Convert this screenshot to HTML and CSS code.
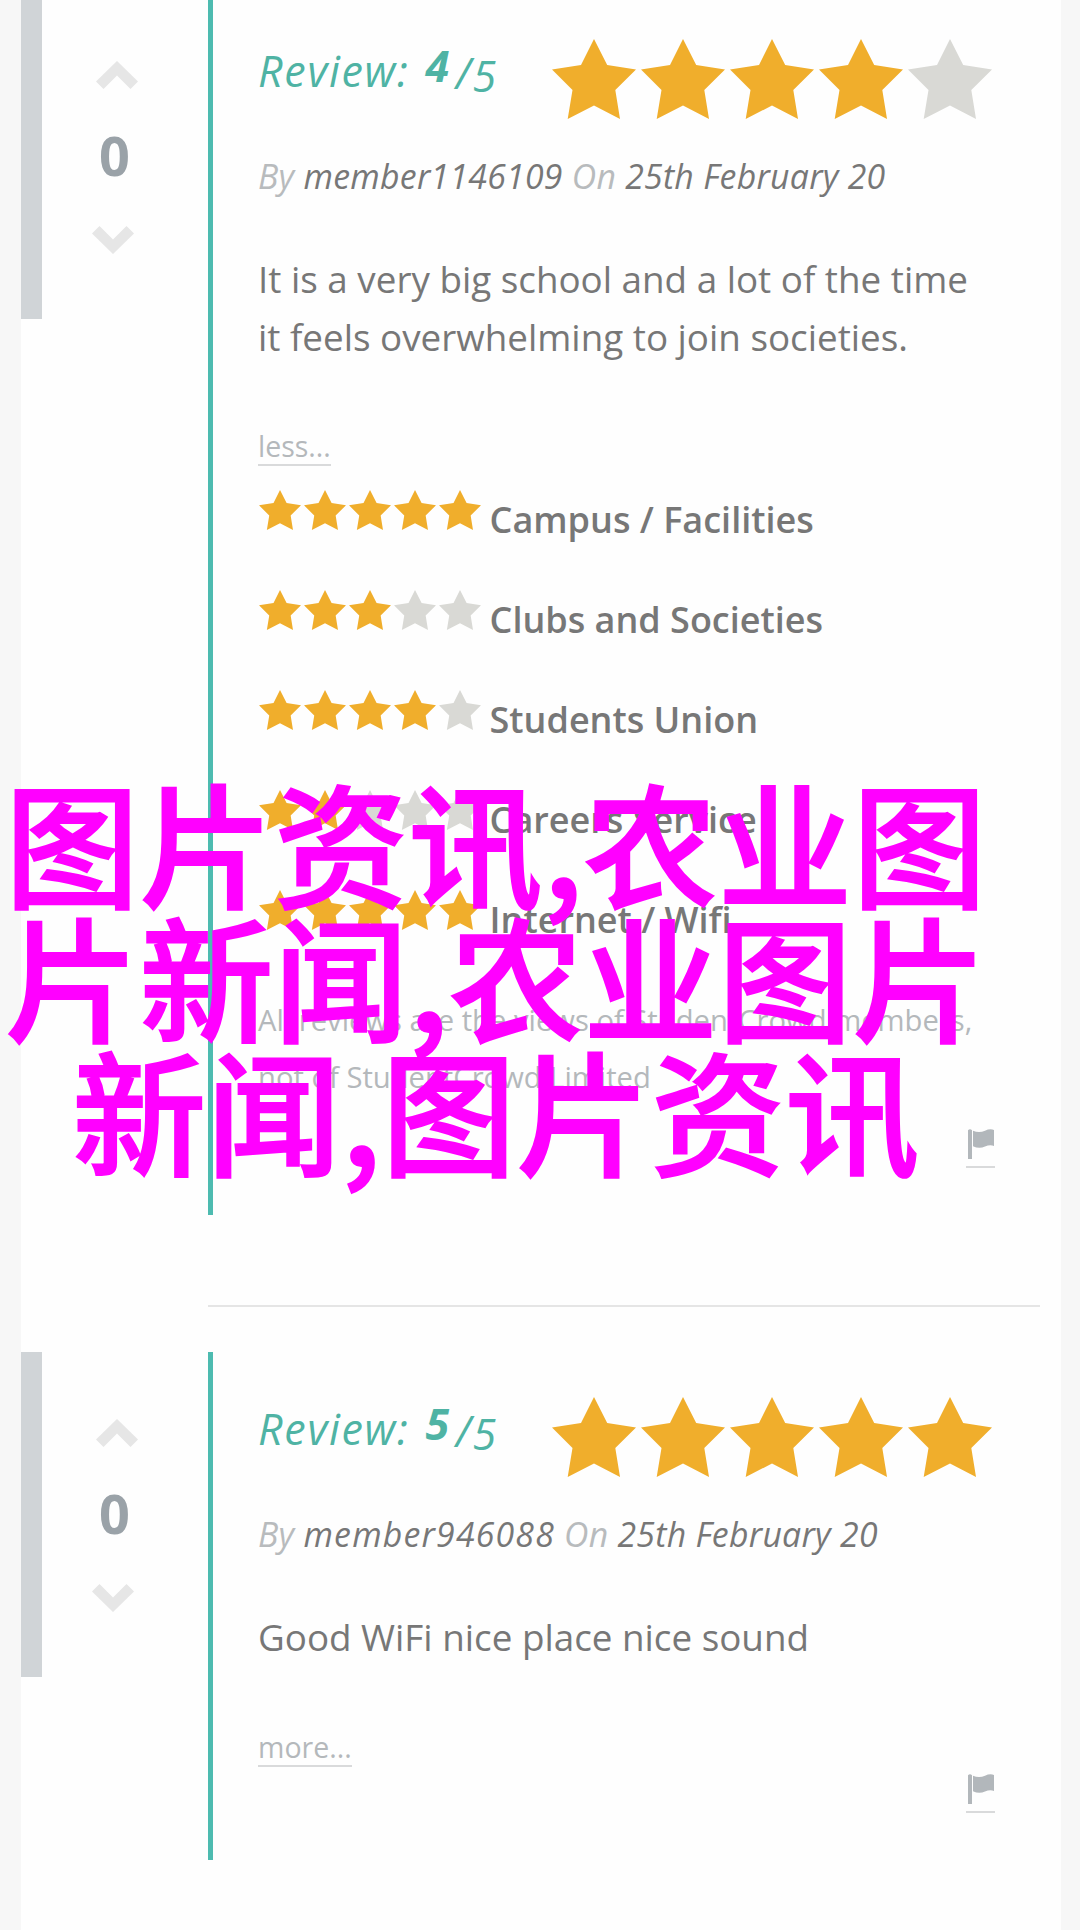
FILE: index.html
```
<!DOCTYPE html>
<html lang="en">

<head>
  <meta charset="UTF-8">
  <meta name="viewport" content="width=device-width, initial-scale=1.0">
  <title>Reviews</title>
  <link rel="stylesheet" href="styles.css">
</head>

<body>
  <!-- icons -->
  <svg class="icons">
    <symbol id="star" viewBox="0 0 84 80">
      <path d="M42 0L55.2 26L84 30.5L63.3 51L68 80L42 66.5L15.7 80L20.5 51L0 30.5L29 26Z" />
    </symbol>
    <symbol id="arrow" viewBox="0 0 42 28">
      <path d="M21 0L42 20.5L34.5 28L21 14.5L7.5 28L0 20.5Z" />
    </symbol>
    <symbol id="flag" viewBox="0 0 26 30">
      <path d="M0 1.2Q2 -.8 4 1.2V30H0Z" />
      <path d="M5 1.8Q11 4.2 17 1.8Q22 -.6 26 1V17Q22 15.4 17 17.6Q11 20.2 5 17.2Z" />
    </symbol>
  </svg>

  <div class="page">
    <div class="review">
      <div class="vote">
        <svg class="vote-up"><use href="#arrow" /></svg>
        <div class="vote-num">0</div>
        <svg class="vote-down"><use href="#arrow" /></svg>
      </div>
      <div class="review-inner">
        <div class="review-head">
          <div class="review-ttl">Review: <b class="score">4</b><span class="slash">/</span><span class="total">5</span></div>
          <div class="stars">
            <svg><use href="#star" /></svg>
            <svg><use href="#star" /></svg>
            <svg><use href="#star" /></svg>
            <svg><use href="#star" /></svg>
            <svg class="off"><use href="#star" /></svg>
          </div>
        </div>
        <div class="review-by">By <span>member1146109</span> On <span>25th February 20</span></div>
        <p class="review-txt">It is a very big school and a lot of the time<br>it feels overwhelming to join societies.</p>
        <a href="#" class="toggle">less...</a>
        <div class="ratings">
          <div class="rating">
            <div class="stars stars-s">
              <svg><use href="#star" /></svg>
              <svg><use href="#star" /></svg>
              <svg><use href="#star" /></svg>
              <svg><use href="#star" /></svg>
              <svg><use href="#star" /></svg>
            </div>
            <div class="rating-ttl">Campus / Facilities</div>
          </div>
          <div class="rating">
            <div class="stars stars-s">
              <svg><use href="#star" /></svg>
              <svg><use href="#star" /></svg>
              <svg><use href="#star" /></svg>
              <svg class="off"><use href="#star" /></svg>
              <svg class="off"><use href="#star" /></svg>
            </div>
            <div class="rating-ttl">Clubs and Societies</div>
          </div>
          <div class="rating">
            <div class="stars stars-s">
              <svg><use href="#star" /></svg>
              <svg><use href="#star" /></svg>
              <svg><use href="#star" /></svg>
              <svg><use href="#star" /></svg>
              <svg class="off"><use href="#star" /></svg>
            </div>
            <div class="rating-ttl">Students Union</div>
          </div>
          <div class="rating">
            <div class="stars stars-s">
              <svg><use href="#star" /></svg>
              <svg><use href="#star" /></svg>
              <svg class="off"><use href="#star" /></svg>
              <svg class="off"><use href="#star" /></svg>
              <svg class="off"><use href="#star" /></svg>
            </div>
            <div class="rating-ttl">Careers Service</div>
          </div>
          <div class="rating">
            <div class="stars stars-s">
              <svg><use href="#star" /></svg>
              <svg><use href="#star" /></svg>
              <svg><use href="#star" /></svg>
              <svg><use href="#star" /></svg>
              <svg><use href="#star" /></svg>
            </div>
            <div class="rating-ttl">Internet / Wifi</div>
          </div>
        </div>
        <p class="note">All reviews are the views of StudentCrowd members,<br>not of StudentCrowd Limited</p>
        <a href="#" class="flag"><svg><use href="#flag" /></svg></a>
      </div>
    </div>

    <hr class="line">

    <div class="review">
      <div class="vote">
        <svg class="vote-up"><use href="#arrow" /></svg>
        <div class="vote-num">0</div>
        <svg class="vote-down"><use href="#arrow" /></svg>
      </div>
      <div class="review-inner">
        <div class="review-head">
          <div class="review-ttl">Review: <b class="score">5</b><span class="slash">/</span><span class="total">5</span></div>
          <div class="stars">
            <svg><use href="#star" /></svg>
            <svg><use href="#star" /></svg>
            <svg><use href="#star" /></svg>
            <svg><use href="#star" /></svg>
            <svg><use href="#star" /></svg>
          </div>
        </div>
        <div class="review-by">By <span class="wide">member946088</span> On <span>25th February 20</span></div>
        <p class="review-txt">Good WiFi nice place nice sound</p>
        <a href="#" class="toggle">more...</a>
        <a href="#" class="flag"><svg><use href="#flag" /></svg></a>
      </div>
    </div>
  </div>

  <!-- caption over the page -->
  <div class="caption" lang="zh-CN">图片资讯,农业图<br>片新闻,农业图片<br>新闻,图片资讯</div>
</body>

</html>
```
FILE: styles.css
```
body {
  margin: 0;
  background: #f7f7f7;
  font-family: "Open Sans", "Noto Sans", sans-serif;
  color: #777;
}

p {
  margin: 0;
}

a {
  color: #b4b8bb;
  text-decoration: none;
}

.icons {
  display: none;
}

.page {
  height: 1930px;
  margin: 0 19px 0 21px;
  background: #fefefe;
  overflow: hidden;
}

.review {
  display: flex;
  align-items: flex-start;
}

.review:first-child {
  margin-top: -6px;
}

/* vote */
.vote {
  box-sizing: border-box;
  display: flex;
  flex-direction: column;
  align-items: center;
  width: 187px;
  height: 325px;
  padding: 67px 21px 0 0;
  border-left: 21px solid #d0d4d7;
}

.vote svg {
  width: 42px;
  height: 28px;
  fill: #e6e6e6;
}

.vote-up {
  margin-left: 5px;
}

.vote .vote-down {
  margin: 5px 3px 0 0;
  transform: rotate(180deg);
}

.vote-num {
  font-size: 54px;
  font-weight: 700;
  line-height: 132px;
  color: #9aa2a8;
}

/* review */
.review-inner {
  flex: 1;
  display: flex;
  flex-direction: column;
  align-items: flex-start;
  padding: 45px 66px 47px 45px;
  border-left: 5px solid #4dbbb0;
}

.review-head {
  display: flex;
  justify-content: space-between;
  box-sizing: border-box;
  width: 100%;
  height: 80px;
  padding-right: 3.5px;
}

.review-ttl {
  font-size: 43px;
  font-style: italic;
  line-height: 64px;
  letter-spacing: 1.7px;
  color: #4fb3a4;
  white-space: nowrap;
}

.review-ttl b,
.review-ttl span {
  line-height: 0;
}

.score {
  margin-left: 3px;
  vertical-align: 5px;
}

.slash {
  margin-left: 5px;
  vertical-align: -2px;
}

.total {
  vertical-align: -5px;
}

.stars {
  display: flex;
  gap: 5px;
}

.stars svg {
  width: 84px;
  height: 80px;
  fill: #f0ae2c;
}

.stars .off {
  fill: #d9d9d5;
}

.stars-s {
  gap: 2.9px;
}

.stars-s svg {
  width: 42px;
  height: 40px;
}

.review-by {
  margin-top: 29px;
  font-size: 33.8px;
  font-style: italic;
  line-height: 57px;
  letter-spacing: .27px;
  color: #b8bbbd;
}

.review-by span {
  color: #777;
}

.review-by .wide {
  letter-spacing: 1.2px;
}

.review-txt {
  margin-top: 45px;
  font-size: 36.8px;
  line-height: 58px;
}

.toggle {
  box-sizing: border-box;
  height: 41px;
  margin-top: 60px;
  padding-top: 1px;
  border-bottom: 2px solid #d9dadb;
  font-size: 28.5px;
  line-height: 40px;
}

.review-txt + .toggle {
  margin-top: 60px;
}

.review:first-child .toggle {
  margin-top: 59px;
}

/* ratings */
.ratings {
  padding: 24px 0 2px 1px;
}

.rating {
  display: flex;
  align-items: flex-start;
  height: 100px;
}

.rating-ttl {
  margin-left: 9px;
  font-size: 36px;
  font-weight: 600;
  line-height: 59px;
}

.note {
  padding-bottom: 16px;
  font-size: 29.2px;
  line-height: 57px;
  color: #b4b8bb;
  white-space: nowrap;
}

.flag {
  align-self: flex-end;
  box-sizing: border-box;
  width: 29px;
  height: 39px;
  margin-top: 7px;
  padding-left: 2px;
  border-bottom: 2px solid #d9dadb;
}

.flag svg {
  display: block;
  width: 26px;
  height: 30px;
  fill: #b2b7bb;
}

.line {
  height: 2px;
  margin: 90px 21px 45px 187px;
  border: none;
  background: #e5e5e5;
}

/* caption */
.caption {
  position: absolute;
  top: 773px;
  left: 0;
  width: 992px;
  font-family: "Noto Sans CJK SC", sans-serif;
  font-size: 134px;
  font-weight: 500;
  line-height: 134px;
  letter-spacing: .5px;
  text-align: center;
  white-space: nowrap;
  color: #f0f;
  -webkit-text-stroke: 2px #f0f;
}
```
